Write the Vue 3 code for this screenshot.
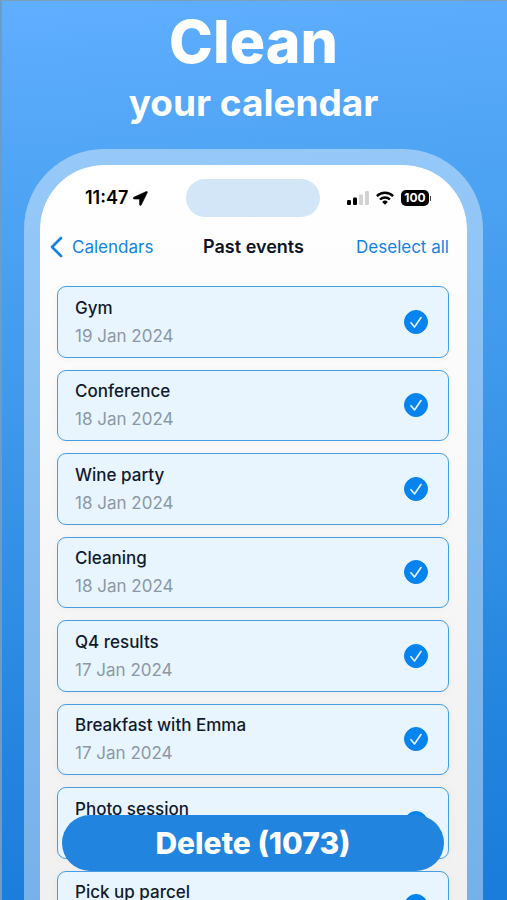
<script setup>
import { ref, computed } from 'vue'

const events = ref([
  { name: 'Gym', date: '19 Jan 2024', selected: true },
  { name: 'Conference', date: '18 Jan 2024', selected: true },
  { name: 'Wine party', date: '18 Jan 2024', selected: true },
  { name: 'Cleaning', date: '18 Jan 2024', selected: true },
  { name: 'Q4 results', date: '17 Jan 2024', selected: true },
  { name: 'Breakfast with Emma', date: '17 Jan 2024', selected: true },
  { name: 'Photo session', date: '', selected: true },
  { name: 'Pick up parcel', date: '', selected: true },
])

const older = 1065
const total = computed(() => older + events.value.filter((e) => e.selected).length)

function deselectAll() {
  events.value.forEach((e) => { e.selected = false })
}
</script>

<template>
  <main class="page">
    <h1 class="headline">
      <span class="big">Clean</span>
      <span class="small">your calendar</span>
    </h1>

    <section class="phone">
      <div class="status">
        <div class="clock">
          <span>11:47</span>
          <svg width="15" height="15" viewBox="0 0 15 15" aria-hidden="true">
            <path d="M13.300.5.8 6.300c-1 .5-.8 1.700.3 1.700l5.400.1.1 5.400c0 1.100 1.200 1.300 1.700.3L14.300 1.500c.3-.8-.2-1.300-1-1Z" fill="#000" stroke="#000" stroke-width=".6" />
          </svg>
        </div>
        <div class="island"></div>
        <div class="signals">
          <svg width="22" height="14" viewBox="0 0 22 14" aria-hidden="true">
            <rect x="0" y="9" width="4" height="5" rx="1.200" fill="#000" />
            <rect x="6" y="6.500" width="4" height="7.500" rx="1.200" fill="#000" />
            <rect x="12" y="3.500" width="4" height="10.500" rx="1.200" fill="#d2d2d2" />
            <rect x="18" y="0" width="4" height="14" rx="1.200" fill="#d2d2d2" />
          </svg>
          <svg width="18" height="14" viewBox="0 0 18 14" aria-hidden="true">
            <g fill="none" stroke="#000" stroke-width="2.400">
              <path d="M.9 5.100a11.600 11.600 0 0 1 16.200 0" />
              <path d="M4 8.500a7.200 7.200 0 0 1 10 0" />
            </g>
            <path d="M9 13.700 6.200 10.900a4 4 0 0 1 5.600 0Z" fill="#000" />
          </svg>
          <span class="battery"><span class="level">100</span></span>
        </div>
      </div>

      <nav class="nav">
        <a class="back" href="#calendars">
          <svg width="14" height="22" viewBox="0 0 14 22" aria-hidden="true">
            <path d="M11 2 2 11l9 9" fill="none" stroke="#0f83e6" stroke-width="2.600" stroke-linecap="round" stroke-linejoin="round" />
          </svg>
          <span>Calendars</span>
        </a>
        <h2 class="title">Past events</h2>
        <button class="deselect" type="button" @click="deselectAll">Deselect all</button>
      </nav>

      <ul class="list">
        <li v-for="(e, i) in events" :key="i">
          <label class="card" :class="{ on: e.selected }">
            <span class="text">
              <span class="name">{{ e.name }}</span>
              <span class="date">{{ e.date }}</span>
            </span>
            <span class="tick">
              <input v-model="e.selected" type="checkbox" />
              <svg width="24" height="24" viewBox="0 0 24 24" aria-hidden="true">
                <path d="M7 12.700l3.500 4.300L17 7.500" fill="none" stroke="#e8f5ff" stroke-width="1.600" stroke-linecap="round" stroke-linejoin="round" />
              </svg>
            </span>
          </label>
        </li>
      </ul>
    </section>

    <button class="delete" type="button">Delete ({{ total }})</button>
  </main>
</template>

<style>
body {
  background: #1a7cdb;
}
</style>

<style scoped>
.page {
  position: relative;
  box-sizing: border-box;
  height: 100vh;
  overflow: hidden;
  display: flex;
  flex-direction: column;
  border-top: 1px solid #7c9fbf;
  border-left: 2px solid #6f9cc6;
  background: linear-gradient(175deg, #60aeff 0%, #4fa4f4 20%, #3a95e9 50%, #2385df 80%, #1a7cdb 100%);
  font-family: Inter, "Liberation Sans", sans-serif;
}
.headline {
  display: flex;
  flex-direction: column;
  align-items: center;
  margin: 0;
  padding: 6px 2px 0 0;
  color: #fff;
}
.big {
  font-size: 59px;
  line-height: 70px;
  font-weight: 800;
}
.small {
  font-size: 37px;
  line-height: 52px;
  font-weight: 700;
}
.phone {
  margin: 20px 24px 0 22px;
  border: 16px solid rgba(255, 255, 255, 0.4);
  border-bottom: 0;
  border-radius: 80px 80px 0 0;
  background: linear-gradient(#fff 0, #fdfdfd 120px, #f0f0f0 735px) padding-box;
}
.status {
  display: grid;
  grid-template-columns: 1fr 134px 1fr;
  align-items: center;
  padding: 14px 1px 0 0;
}
.clock {
  display: flex;
  align-items: center;
  gap: 5px;
  padding-left: 45px;
  font-size: 18px;
  line-height: 22px;
  font-weight: 600;
  color: #000;
}
.island {
  height: 38px;
  border-radius: 19px;
  background: #d2e6f8;
}
.signals {
  display: flex;
  align-items: center;
  justify-content: flex-end;
  gap: 7px;
  padding-right: 35px;
}
.battery {
  display: flex;
  align-items: center;
  gap: 1px;
}
.battery::after {
  content: "";
  width: 1px;
  height: 5px;
  background: #444;
}
.level {
  width: 28px;
  border-radius: 5px;
  background: #000;
  color: #fff;
  font-size: 12px;
  line-height: 16px;
  font-weight: 700;
  text-align: center;
}
.nav {
  display: grid;
  grid-template-columns: 1fr auto 1fr;
  align-items: center;
  padding: 18px 18px 0;
  font-size: 17px;
  line-height: 24px;
}
.back {
  display: flex;
  align-items: center;
  gap: 8px;
  margin-left: -8px;
  color: #0f83e6;
  text-decoration: none;
}
.title {
  margin: 0;
  font-size: 18px;
  font-weight: 600;
  color: #0d1424;
}
.deselect {
  justify-self: end;
  padding: 0;
  border: 0;
  background: none;
  font: inherit;
  color: #0f83e6;
  white-space: nowrap;
}
.list {
  display: grid;
  grid-auto-rows: 1fr;
  gap: 12px;
  height: 656px;
  margin: 27px 18px 0 17px;
  padding: 0;
  list-style: none;
}
.card {
  box-sizing: border-box;
  height: 100%;
  display: flex;
  align-items: center;
  justify-content: space-between;
  padding: 0 20px 0 17px;
  border: 1px solid #d0d5da;
  border-radius: 9px;
  background: #fff;
  box-shadow: 0 1px 8px rgba(0, 0, 0, 0.04);
}
.card.on {
  border-color: #459de2;
  background: #e8f5ff;
}
.text {
  display: grid;
  grid-template-rows: 28px 28px;
  font-size: 17px;
  line-height: 28px;
}
.name {
  font-weight: 500;
  color: #101a2b;
}
.date {
  color: #8b98a4;
}
.tick {
  display: grid;
}
.tick > * {
  grid-area: 1 / 1;
}
.tick svg {
  pointer-events: none;
}
.tick input {
  appearance: none;
  width: 24px;
  height: 24px;
  margin: 0;
  border: 1px solid #b4bdc6;
  border-radius: 50%;
}
.tick input:checked {
  border-color: #0583ee;
  background: #0583ee;
}
.delete {
  position: absolute;
  left: 60px;
  right: 63px;
  bottom: 29px;
  height: 56px;
  border: 0;
  border-radius: 28px;
  background: #2184df;
  color: #fff;
  font-family: inherit;
  font-size: 30px;
  font-weight: 800;
}
</style>
